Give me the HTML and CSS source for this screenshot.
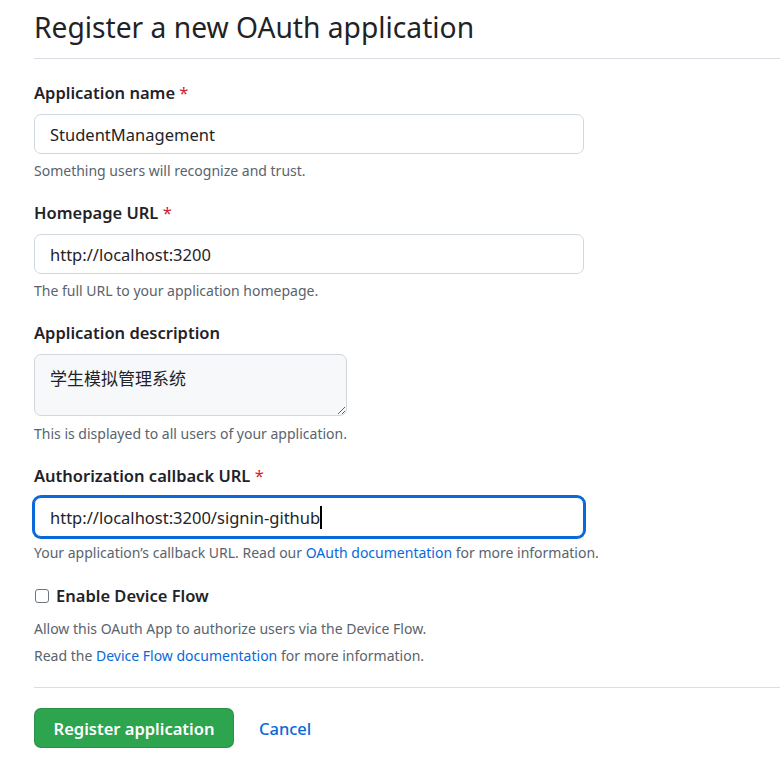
FILE: index.html
```html
<!DOCTYPE html>
<html lang="en">
<head>
<meta charset="utf-8">
<title>Register a new OAuth application</title>
<link rel="stylesheet" href="styles.css">
</head>
<body>
<main class="page">
  <div class="subhead">
    <h1 class="subhead-heading">Register a new OAuth application</h1>
  </div>
  <form class="form">
    <div class="form-group">
      <label class="label">Application name <span class="req">*</span></label>
      <input class="form-control" type="text" value="StudentManagement">
      <p class="note">Something users will recognize and trust.</p>
    </div>
    <div class="form-group">
      <label class="label">Homepage URL <span class="req">*</span></label>
      <input class="form-control" type="text" value="http://localhost:3200">
      <p class="note">The full URL to your application homepage.</p>
    </div>
    <div class="form-group">
      <label class="label">Application description</label>
      <textarea class="form-control textarea">学生模拟管理系统</textarea>
      <p class="note note-tight">This is displayed to all users of your application.</p>
    </div>
    <div class="form-group">
      <label class="label">Authorization callback URL <span class="req">*</span></label>
      <div class="form-control focused" role="textbox"><span class="value">http://localhost:3200/signin-github</span><span class="caret"></span></div>
      <p class="note note-cb">Your application’s callback URL. Read our <a href="#" class="link">OAuth documentation</a> for more information.</p>
    </div>
    <div class="check-group">
      <label class="check-label"><input type="checkbox" class="checkbox"> Enable Device Flow</label>
      <p class="note note-first">Allow this OAuth App to authorize users via the Device Flow.</p>
      <p class="note note-second">Read the <a href="#" class="link">Device Flow documentation</a> for more information.</p>
    </div>
    <div class="actions">
      <button type="button" class="btn-primary">Register application</button>
      <a href="#" class="cancel">Cancel</a>
    </div>
  </form>
</main>
</body>
</html>
```
FILE: styles.css
```css
html, body {
  margin: 0;
  padding: 0;
  background: #ffffff;
}
body {
  font-family: "Noto Sans", "Noto Sans CJK SC", sans-serif;
  color: #1f2328;
  overflow: hidden;
}
.page {
  padding-left: 34px;
}
.subhead {
  border-bottom: 1px solid #d8dee4;
  padding-top: 6px;
  padding-bottom: 9px;
}
.subhead-heading {
  margin: 0;
  font-size: 28.2px;
  font-weight: 400;
  line-height: 43px;
  color: #1f2328;
}
.form {
  display: flex;
  flex-direction: column;
  padding-top: 23px;
}
.form-group {
  display: flex;
  flex-direction: column;
  align-items: flex-start;
  margin-bottom: 21px;
}
.label {
  font-size: 16.5px;
  font-weight: 600;
  line-height: 22px;
  margin-bottom: 10px;
}
.req {
  color: #cf222e;
  font-weight: 400;
}
.form-control {
  box-sizing: border-box;
  width: 550px;
  height: 40px;
  padding: 0 15px;
  border: 1px solid #d0d7de;
  border-radius: 7px;
  background: #ffffff;
  font-family: "Noto Sans", "Noto Sans CJK SC", sans-serif;
  font-size: 16.5px;
  color: #1f2328;
  outline: none;
}
.textarea {
  width: 313px;
  height: 62px;
  padding: 10px 15px 0;
  line-height: 25px;
  background: #f6f8fa;
  resize: vertical;
  font-family: "Noto Sans CJK SC", sans-serif;
  font-size: 17px;
}
.focused {
  display: flex;
  align-items: center;
  border-color: #0969da;
  box-shadow: 0 0 0 2px #0969da;
}
.value {
  white-space: nowrap;
}
.caret {
  display: inline-block;
  width: 2px;
  height: 23px;
  background: #000000;
  margin-left: 0;
}
.note {
  margin: 7px 0 0;
  font-size: 14px;
  line-height: 20px;
  color: #59636e;
}
.note-tight {
  margin-top: 8px;
}
.note-cb {
  margin-top: 6px;
}
.link {
  color: #0969da;
  text-decoration: none;
}
.check-group {
  display: flex;
  flex-direction: column;
  padding-top: 1px;
}
.check-label {
  display: flex;
  align-items: center;
  font-size: 16.5px;
  font-weight: 600;
  line-height: 22px;
}
.checkbox {
  appearance: none;
  -webkit-appearance: none;
  box-sizing: border-box;
  width: 14px;
  height: 14px;
  margin: 0 7px 0 1px;
  border: 1px solid #6e7781;
  border-radius: 3px;
  background: #ffffff;
}
.note-first {
  margin-top: 12px;
}
.note-second {
  margin-top: 7px;
}
.actions {
  display: flex;
  align-items: center;
  margin-top: 21px;
  padding-top: 20px;
  border-top: 1px solid #d8dee4;
}
.btn-primary {
  box-sizing: border-box;
  height: 40px;
  width: 200px;
  border: 1px solid rgba(31, 35, 40, 0.15);
  border-radius: 7px;
  background: #2da44e;
  color: #ffffff;
  font-family: "Noto Sans", sans-serif;
  font-size: 16.5px;
  font-weight: 600;
  padding: 0;
}
.cancel {
  margin-left: 25px;
  color: #0969da;
  text-decoration: none;
  font-size: 16.5px;
  font-weight: 500;
}
```
